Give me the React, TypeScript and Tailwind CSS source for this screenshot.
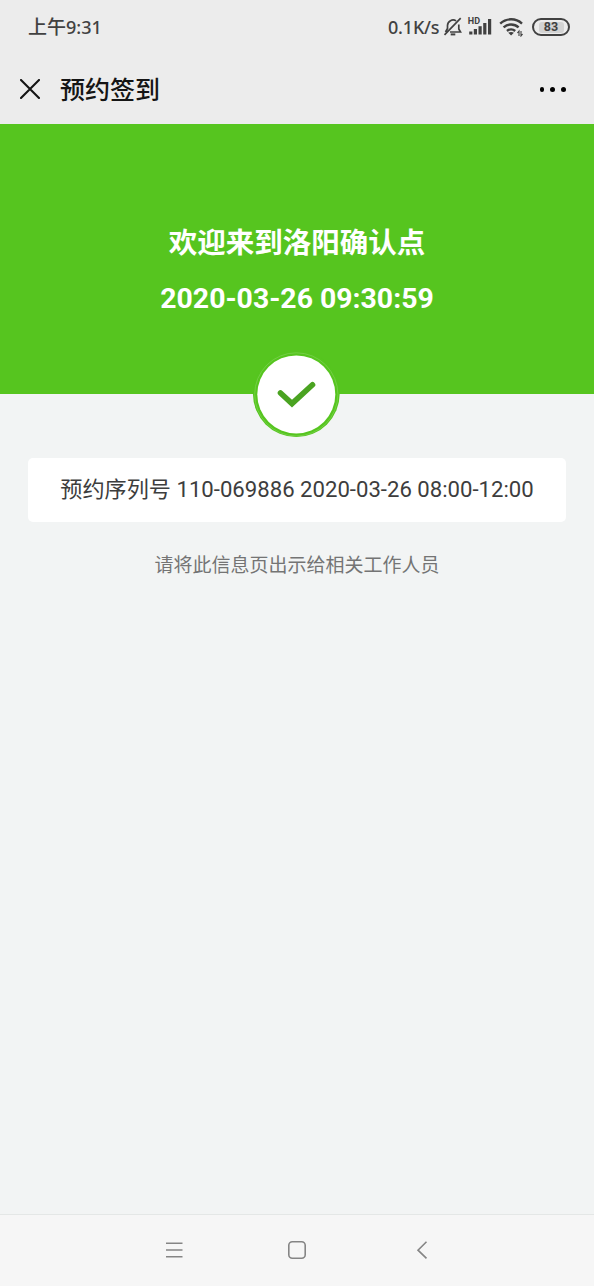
import type { ReactNode } from "react";

const details = {
  site: "欢迎来到洛阳确认点",
  time: "2020-03-26 09:30:59",
  booking: "预约序列号 110-069886 2020-03-26 08:00-12:00",
  hint: "请将此信息页出示给相关工作人员",
};

function StatusBar() {
  return (
    <div className="flex h-[54px] items-center justify-between pl-7 pr-6 text-[#414141] font-['Noto_Sans','Noto_Sans_CJK_SC',sans-serif] font-medium">
      <span className="text-[19px] leading-none whitespace-nowrap">
        上午<span className="text-[18px]">9:31</span>
      </span>
      <div className="flex items-center">
        <span className="w-[51px] text-[18px] leading-none tracking-[-0.2px] whitespace-nowrap">
          0.1K/s
        </span>
        <svg
          className="ml-1 h-[20px] w-[20px]"
          viewBox="0 0 20 20"
          fill="none"
          stroke="currentColor"
          strokeWidth="1.7"
        >
          <path d="M4.5 12V8.5a5.6 5.6 0 0 1 8.6-4.6M15.8 7.5V12l1.7 3H7M4.5 11.5 2.5 15M1.5 17.8 17.7 1.2" />
          <path d="M7.7 17.4h4.6" strokeWidth="2" />
        </svg>
        <svg
          className="ml-1 h-[24px] w-[26px]"
          viewBox="0 -2 26 24"
          fill="currentColor"
        >
          <text
            x="0.8"
            y="7"
            fontSize="9"
            fontWeight="700"
            fontFamily="Roboto, sans-serif"
          >
            HD
          </text>
          <rect x="2.2" y="14.5" width="3.2" height="3" />
          <rect x="6.8" y="12" width="3.2" height="5.5" />
          <rect x="11.5" y="9.2" width="3.2" height="8.3" />
          <rect x="16.2" y="6" width="3.2" height="11.5" />
          <rect x="21" y="2" width="3.2" height="15.5" />
        </svg>
        <svg
          className="ml-1.5 h-[20px] w-[26px]"
          viewBox="0 0 26 20"
          fill="none"
          stroke="currentColor"
          strokeWidth="2.4"
        >
          <path d="M1.2 6.6a16 16 0 0 1 21.8 0M4.6 10.4a11 11 0 0 1 15 0M8 14a6.2 6.2 0 0 1 8.2 0" />
          <path
            d="m9.3 15.8 2.8 2.8 2.8-2.8c-1.6-1.2-4-1.2-5.6 0Z"
            fill="currentColor"
            stroke="none"
          />
          <path d="M20 19v-5l-1.6 2M22 14v5l1.6-2" strokeWidth="1.1" />
        </svg>
        <div className="ml-[7px] flex h-[18px] w-[38px] items-center justify-center rounded-full border-2 border-[#414141]">
          <span className="flex h-[11px] w-[25px] items-center justify-center rounded-[3px] bg-[#d3d3d3] text-[12.5px] font-bold leading-none font-['Roboto',sans-serif]">
            83
          </span>
        </div>
      </div>
    </div>
  );
}

function TitleBar() {
  return (
    <header className="flex h-[70px] items-center pl-5 pr-[28.5px] text-[#151515]">
      <svg
        className="h-5 w-5"
        viewBox="0 0 20 20"
        fill="none"
        stroke="currentColor"
        strokeWidth="2.1"
      >
        <path d="M0.3 0.3 19.7 19.7M19.7 0.3 0.3 19.7" />
      </svg>
      <h1 className="ml-5 flex-1 pt-[3px] text-[25px] font-medium leading-none">
        预约签到
      </h1>
      <div className="flex gap-1.5 pt-px">
        <i className="size-[4.6px] rounded-full bg-black" />
        <i className="size-[4.6px] rounded-full bg-black" />
        <i className="size-[4.6px] rounded-full bg-black" />
      </div>
    </header>
  );
}

function CheckBadge() {
  return (
    <svg
      className="absolute bottom-[-44px] left-[252px] h-[88px] w-[88px]"
      viewBox="0 0 88 88"
      fill="none"
    >
      <circle cx="44.3" cy="43.7" r="43.4" fill="#56c51f" />
      <circle cx="44.3" cy="44.4" r="41.6" stroke="#79d14d" strokeWidth="0.8" />
      <circle cx="44.3" cy="44.4" r="39" fill="#fff" />
      <path
        d="M28.5 43 40 53.6 60.5 34.8"
        stroke="#4aa321"
        strokeWidth="5.6"
        strokeLinecap="round"
      />
    </svg>
  );
}

function NavIcon({ children }: { children: ReactNode }) {
  return (
    <svg
      className="h-5 w-5"
      viewBox="0 0 20 20"
      fill="none"
      stroke="#858585"
      strokeWidth="1.6"
    >
      {children}
    </svg>
  );
}

export default function App() {
  return (
    <div className="flex h-[1286px] w-[594px] flex-col overflow-hidden bg-[#f2f4f4] font-['Roboto','Noto_Sans_CJK_SC',sans-serif]">
      <div className="bg-[#ececec]">
        <StatusBar />
        <TitleBar />
      </div>
      <section className="relative h-[270px] bg-[#56c51f] pt-[100px] text-center font-bold text-white">
        <h2 className="text-[28.5px] leading-10">{details.site}</h2>
        <p className="mt-[15px] text-[28.4px] leading-10">{details.time}</p>
        <CheckBadge />
      </section>
      <main className="flex-1 px-7 pt-16 text-center">
        <div className="flex h-16 items-center justify-center rounded-[5px] bg-white text-[22.15px] whitespace-nowrap text-[#3d3d3d]">
          {details.booking}
        </div>
        <p className="mt-[30px] text-[19px] leading-7 text-[#747474]">
          {details.hint}
        </p>
      </main>
      <nav className="flex h-[72px] items-center gap-[103px] border-t border-[#e4e7e6] bg-[#f6f6f6] pb-0.5 pl-[164px]">
        <NavIcon>
          <path d="M2 3.2h16.5M2 10h16.5M2 16.8h16.5" />
        </NavIcon>
        <NavIcon>
          <rect x="1.8" y="1.8" width="16.4" height="16.4" rx="3.5" />
        </NavIcon>
        <NavIcon>
          <path d="M16.5 1.8 8 10.2l8.5 8.2" />
        </NavIcon>
      </nav>
    </div>
  );
}
